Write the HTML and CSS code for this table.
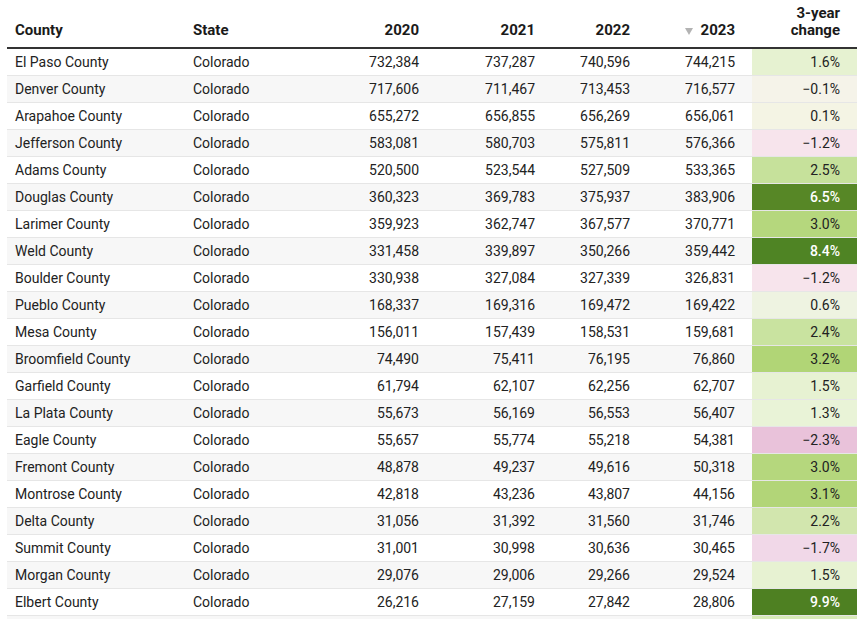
FILE: index.html
```html
<!DOCTYPE html>
<html lang="en">
<head>
<meta charset="utf-8">
<title>Colorado counties population</title>
<link rel="stylesheet" href="styles.css">
</head>
<body>
<table class="tbl">
  <colgroup>
    <col class="c-county"><col class="c-state"><col class="c-y20"><col class="c-y21"><col class="c-y22"><col class="c-y23"><col class="c-chg">
  </colgroup>
  <thead>
    <tr>
      <th class="txt">County</th>
      <th class="txt">State</th>
      <th class="num">2020</th>
      <th class="num">2021</th>
      <th class="num">2022</th>
      <th class="num"><svg class="sort" width="8" height="7" viewBox="0 0 8 7"><path d="M0 0H8L4 7Z" fill="#b3b3b3"/></svg>2023</th>
      <th class="num chg">3-year<br>change</th>
    </tr>
  </thead>
  <tbody>
    <tr><td class="txt">El Paso County</td><td class="txt">Colorado</td><td class="num">732,384</td><td class="num">737,287</td><td class="num">740,596</td><td class="num">744,215</td><td class="num chg g16">1.6%</td></tr>
    <tr><td class="txt">Denver County</td><td class="txt">Colorado</td><td class="num">717,606</td><td class="num">711,467</td><td class="num">713,453</td><td class="num">716,577</td><td class="num chg n01">−0.1%</td></tr>
    <tr><td class="txt">Arapahoe County</td><td class="txt">Colorado</td><td class="num">655,272</td><td class="num">656,855</td><td class="num">656,269</td><td class="num">656,061</td><td class="num chg g01">0.1%</td></tr>
    <tr><td class="txt">Jefferson County</td><td class="txt">Colorado</td><td class="num">583,081</td><td class="num">580,703</td><td class="num">575,811</td><td class="num">576,366</td><td class="num chg n12">−1.2%</td></tr>
    <tr><td class="txt">Adams County</td><td class="txt">Colorado</td><td class="num">520,500</td><td class="num">523,544</td><td class="num">527,509</td><td class="num">533,365</td><td class="num chg g25">2.5%</td></tr>
    <tr><td class="txt">Douglas County</td><td class="txt">Colorado</td><td class="num">360,323</td><td class="num">369,783</td><td class="num">375,937</td><td class="num">383,906</td><td class="num chg g65">6.5%</td></tr>
    <tr><td class="txt">Larimer County</td><td class="txt">Colorado</td><td class="num">359,923</td><td class="num">362,747</td><td class="num">367,577</td><td class="num">370,771</td><td class="num chg g30">3.0%</td></tr>
    <tr><td class="txt">Weld County</td><td class="txt">Colorado</td><td class="num">331,458</td><td class="num">339,897</td><td class="num">350,266</td><td class="num">359,442</td><td class="num chg g84">8.4%</td></tr>
    <tr><td class="txt">Boulder County</td><td class="txt">Colorado</td><td class="num">330,938</td><td class="num">327,084</td><td class="num">327,339</td><td class="num">326,831</td><td class="num chg n12">−1.2%</td></tr>
    <tr><td class="txt">Pueblo County</td><td class="txt">Colorado</td><td class="num">168,337</td><td class="num">169,316</td><td class="num">169,472</td><td class="num">169,422</td><td class="num chg g06">0.6%</td></tr>
    <tr><td class="txt">Mesa County</td><td class="txt">Colorado</td><td class="num">156,011</td><td class="num">157,439</td><td class="num">158,531</td><td class="num">159,681</td><td class="num chg g24">2.4%</td></tr>
    <tr><td class="txt">Broomfield County</td><td class="txt">Colorado</td><td class="num">74,490</td><td class="num">75,411</td><td class="num">76,195</td><td class="num">76,860</td><td class="num chg g32">3.2%</td></tr>
    <tr><td class="txt">Garfield County</td><td class="txt">Colorado</td><td class="num">61,794</td><td class="num">62,107</td><td class="num">62,256</td><td class="num">62,707</td><td class="num chg g15">1.5%</td></tr>
    <tr><td class="txt">La Plata County</td><td class="txt">Colorado</td><td class="num">55,673</td><td class="num">56,169</td><td class="num">56,553</td><td class="num">56,407</td><td class="num chg g13">1.3%</td></tr>
    <tr><td class="txt">Eagle County</td><td class="txt">Colorado</td><td class="num">55,657</td><td class="num">55,774</td><td class="num">55,218</td><td class="num">54,381</td><td class="num chg n23">−2.3%</td></tr>
    <tr><td class="txt">Fremont County</td><td class="txt">Colorado</td><td class="num">48,878</td><td class="num">49,237</td><td class="num">49,616</td><td class="num">50,318</td><td class="num chg g30">3.0%</td></tr>
    <tr><td class="txt">Montrose County</td><td class="txt">Colorado</td><td class="num">42,818</td><td class="num">43,236</td><td class="num">43,807</td><td class="num">44,156</td><td class="num chg g31">3.1%</td></tr>
    <tr><td class="txt">Delta County</td><td class="txt">Colorado</td><td class="num">31,056</td><td class="num">31,392</td><td class="num">31,560</td><td class="num">31,746</td><td class="num chg g22">2.2%</td></tr>
    <tr><td class="txt">Summit County</td><td class="txt">Colorado</td><td class="num">31,001</td><td class="num">30,998</td><td class="num">30,636</td><td class="num">30,465</td><td class="num chg n17">−1.7%</td></tr>
    <tr><td class="txt">Morgan County</td><td class="txt">Colorado</td><td class="num">29,076</td><td class="num">29,006</td><td class="num">29,266</td><td class="num">29,524</td><td class="num chg g15">1.5%</td></tr>
    <tr><td class="txt">Elbert County</td><td class="txt">Colorado</td><td class="num">26,216</td><td class="num">27,159</td><td class="num">27,842</td><td class="num">28,806</td><td class="num chg g99">9.9%</td></tr>
    <tr><td class="txt"></td><td class="txt"></td><td class="num"></td><td class="num"></td><td class="num"></td><td class="num"></td><td class="num chg g20"></td></tr>
  </tbody>
</table>
</body>
</html>
```

FILE: styles.css
```css
html, body {
  margin: 0;
  padding: 0;
  background: #ffffff;
}

body {
  padding-left: 7px;
  font-family: Roboto, "Liberation Sans", Arial, sans-serif;
  color: #222222;
  overflow: hidden;
}

.tbl {
  border-collapse: collapse;
  table-layout: fixed;
  width: 850px;
  font-size: 14px;
}

.c-county { width: 178px; }
.c-state { width: 151px; }
.c-y20 { width: 100px; }
.c-y21 { width: 116px; }
.c-y22 { width: 95px; }
.c-y23 { width: 105px; }
.c-chg { width: 105px; }

.tbl th {
  font-size: 15px;
  font-weight: 700;
  color: #1a1a1a;
  line-height: 17px;
  height: 34px;
  padding: 5px 8px 8px 8px;
  vertical-align: bottom;
  border-bottom: 2px solid #333333;
}

.tbl td {
  height: 26px;
  padding: 0 8px;
  line-height: 26px;
  vertical-align: middle;
  border-bottom: 1px solid #e6e6e6;
  white-space: nowrap;
}

.tbl .txt { text-align: left; }

.tbl .num {
  text-align: right;
  padding-right: 17px;
}

.tbl tbody tr:nth-child(even) td { background: #f7f7f7; }

.sort {
  display: inline-block;
  margin-right: 8px;
  vertical-align: 0px;
}

.tbl td.chg.g16 { background: #e6f2d1; }
.tbl td.chg.n01 { background: #f5f3e9; }
.tbl td.chg.g01 { background: #f4f4e4; }
.tbl td.chg.n12 { background: #f7e4ec; }
.tbl td.chg.g25 { background: #c6e19b; }
.tbl td.chg.g65 { background: #578726; color: #ffffff; font-weight: 500; }
.tbl td.chg.g30 { background: #b5d77d; }
.tbl td.chg.g84 { background: #4f8424; color: #ffffff; font-weight: 500; }
.tbl td.chg.g06 { background: #eef3e1; }
.tbl td.chg.g24 { background: #c9e3a0; }
.tbl td.chg.g32 { background: #b1d576; }
.tbl td.chg.g15 { background: #e7f2d2; }
.tbl td.chg.g13 { background: #e9f3d7; }
.tbl td.chg.n23 { background: #e9c2da; }
.tbl td.chg.g31 { background: #b2d578; }
.tbl td.chg.g22 { background: #d2e6ae; }
.tbl td.chg.n17 { background: #f1d8e8; }
.tbl td.chg.g99 { background: #4e8022; color: #ffffff; font-weight: 500; }
.tbl td.chg.g20 { background: #d8eab8; }
```
